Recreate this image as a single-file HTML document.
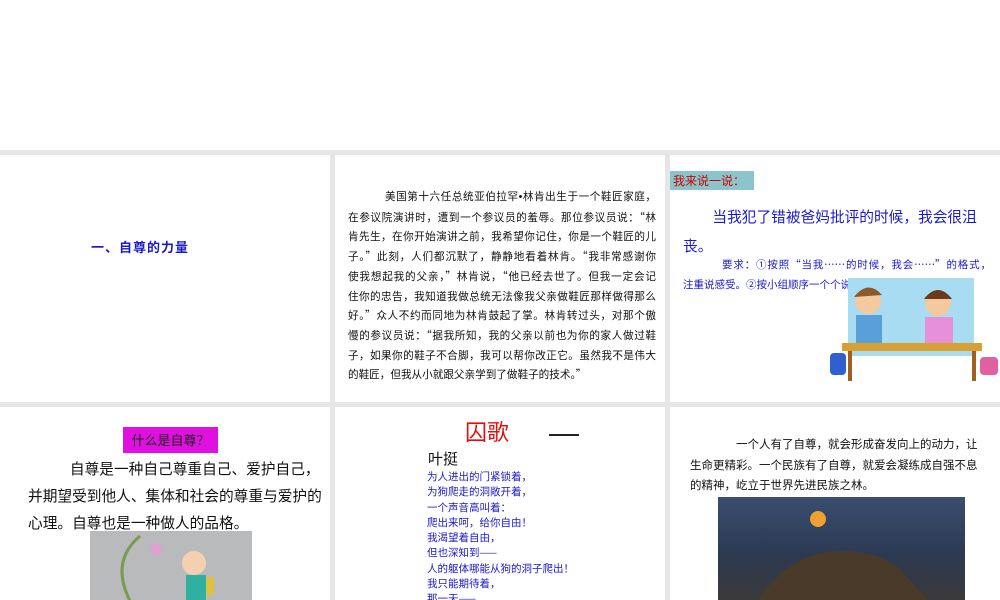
<!DOCTYPE html>
<html><head><meta charset="utf-8"><style>
body{margin:0;width:1000px;height:600px;background:#e6e6e6;position:relative;overflow:hidden;font-family:"Noto Sans CJK SC","Liberation Sans",sans-serif;}
.top{position:absolute;left:0;top:0;width:1000px;height:150px;background:#fff}
.c{position:absolute;background:#fff;overflow:hidden}
.j div{text-align:justify;text-align-last:justify;white-space:nowrap}
.j div.l{text-align-last:left}
</style></head><body>
<div class="top"></div>
<div class="c" style="left:0;top:155px;width:330px;height:247px">
<div style="position:absolute;left:91px;top:82px;font:bold 13px 'Noto Sans CJK SC',sans-serif;letter-spacing:1px;color:#1a1acc">一、自尊的力量</div>
</div>
<div class="c" style="left:335px;top:155px;width:330px;height:247px">
<div class="j" style="position:absolute;left:13px;top:32px;width:308px;font-size:10.6px;line-height:19.7px;color:#111">
<div style="padding-left:37px">美国第十六任总统亚伯拉罕<span style="font-family:'Liberation Sans'">•</span>林肯出生于一个鞋匠家庭，</div>
<div>在参议院演讲时，遭到一个参议员的羞辱。那位参议员说：“林</div>
<div>肯先生，在你开始演讲之前，我希望你记住，你是一个鞋匠的儿</div>
<div>子。”此刻，人们都沉默了，静静地看着林肯。“我非常感谢你</div>
<div>使我想起我的父亲，”林肯说，“他已经去世了。但我一定会记</div>
<div>住你的忠告，我知道我做总统无法像我父亲做鞋匠那样做得那么</div>
<div>好。”众人不约而同地为林肯鼓起了掌。林肯转过头，对那个傲</div>
<div>慢的参议员说：“据我所知，我的父亲以前也为你的家人做过鞋</div>
<div>子，如果你的鞋子不合脚，我可以帮你改正它。虽然我不是伟大</div>
<div class="l">的鞋匠，但我从小就跟父亲学到了做鞋子的技术。”</div>
</div>
</div>
<div class="c" style="left:670px;top:155px;width:330px;height:247px">
<div style="position:absolute;left:0;top:16px;width:81px;height:19px;background:#8cc4cc;color:#c00;font-size:12px;line-height:19px;padding-left:3px">我来说一说：</div>
<div style="position:absolute;left:13px;top:47px;width:312px;font-size:14.7px;line-height:29px;color:#1a1acc;text-indent:2em">当我犯了错被爸妈批评的时候，我会很沮丧。</div>
<div class="j" style="position:absolute;left:13px;top:100px;width:308px;font-size:10.5px;line-height:20px;color:#1a1acc">
<div style="padding-left:39px">要求：①按照“当我……的时候，我会……”的格式，</div>
<div class="l">注重说感受。②按小组顺序一个个说，不重复说。</div>
</div>
<svg style="position:absolute;left:160px;top:118px" width="170" height="110">
<rect x="18" y="5" width="126" height="78" fill="#a8dcf2"/>
<circle cx="38" cy="28" r="13" fill="#f4c9a0"/><path d="M24 24 Q38 6 52 22" fill="#8a5a2a"/>
<rect x="26" y="42" width="26" height="34" fill="#5aa0d8"/>
<circle cx="108" cy="30" r="13" fill="#f4c9a0"/><path d="M94 26 Q108 8 122 26" fill="#6a3a1a"/>
<rect x="95" y="44" width="28" height="32" fill="#e590d8"/>
<rect x="12" y="70" width="140" height="8" fill="#d8a030"/>
<rect x="18" y="78" width="4" height="30" fill="#a06020"/><rect x="142" y="78" width="4" height="30" fill="#a06020"/>
<rect x="0" y="80" width="16" height="22" rx="4" fill="#3060d0"/>
<rect x="150" y="84" width="18" height="18" rx="4" fill="#e060a0"/>
</svg>
</div>
<div class="c" style="left:0;top:407px;width:330px;height:193px">
<div style="position:absolute;left:123px;top:20px;width:95px;height:26px;background:#e010e0;font-size:13px;line-height:26px;text-align:center;color:#222">什么是自尊？</div>
<div style="position:absolute;left:28px;top:48px;width:298px;font-size:14.7px;line-height:27px;color:#111;text-indent:2.85em">自尊是一种自己尊重自己、爱护自己，并期望受到他人、集体和社会的尊重与爱护的心理。自尊也是一种做人的品格。</div>
<div style="position:absolute;left:90px;top:124px;width:162px;height:70px;background:#b8babc"></div>
<svg style="position:absolute;left:90px;top:124px" width="162" height="70"><path d="M40 70 Q20 30 50 5" stroke="#7a9a50" stroke-width="3" fill="none"/><circle cx="66" cy="18" r="6" fill="#e0a0d0"/><circle cx="104" cy="32" r="12" fill="#f4d0b0"/><rect x="96" y="44" width="20" height="26" fill="#30b0a0"/><rect x="116" y="46" width="8" height="18" fill="#e0c040"/></svg>
</div>
<div class="c" style="left:335px;top:407px;width:330px;height:193px">
<div style="position:absolute;left:130px;top:8px;font-size:22px;color:#e01010">囚歌</div>
<div style="position:absolute;left:214px;top:27px;width:30px;border-top:2px solid #222"></div>
<div style="position:absolute;left:93px;top:42px;font-size:15px;line-height:20px;color:#111">叶挺</div>
<div style="position:absolute;left:92px;top:62px;font-size:10.5px;line-height:15.3px;color:#1a1acc">为人进出的门紧锁着，<br>为狗爬走的洞敞开着，<br>一个声音高叫着：<br>爬出来呵，给你自由！<br>我渴望着自由，<br>但也深知到——<br>人的躯体哪能从狗的洞子爬出！<br>我只能期待着，<br>那一天——<br>地下的烈火冲腾，</div>
</div>
<div class="c" style="left:670px;top:407px;width:330px;height:193px">
<div style="position:absolute;left:20px;top:27px;width:294px;font-size:11.5px;line-height:20.5px;color:#111;text-indent:4em">一个人有了自尊，就会形成奋发向上的动力，让生命更精彩。一个民族有了自尊，就爱会凝练成自强不息的精神，屹立于世界先进民族之林。</div>
<div style="position:absolute;left:48px;top:90px;width:247px;height:103px;background:linear-gradient(#3a4e70,#2c3a52 55%,#3a3a3a)"></div>
<svg style="position:absolute;left:48px;top:90px" width="247" height="103"><circle cx="100" cy="22" r="8" fill="#f0a030"/><path d="M40 103 Q70 60 110 55 Q150 50 180 70 L210 103Z" fill="#4a3a2a"/></svg>
</div>
</body></html>
